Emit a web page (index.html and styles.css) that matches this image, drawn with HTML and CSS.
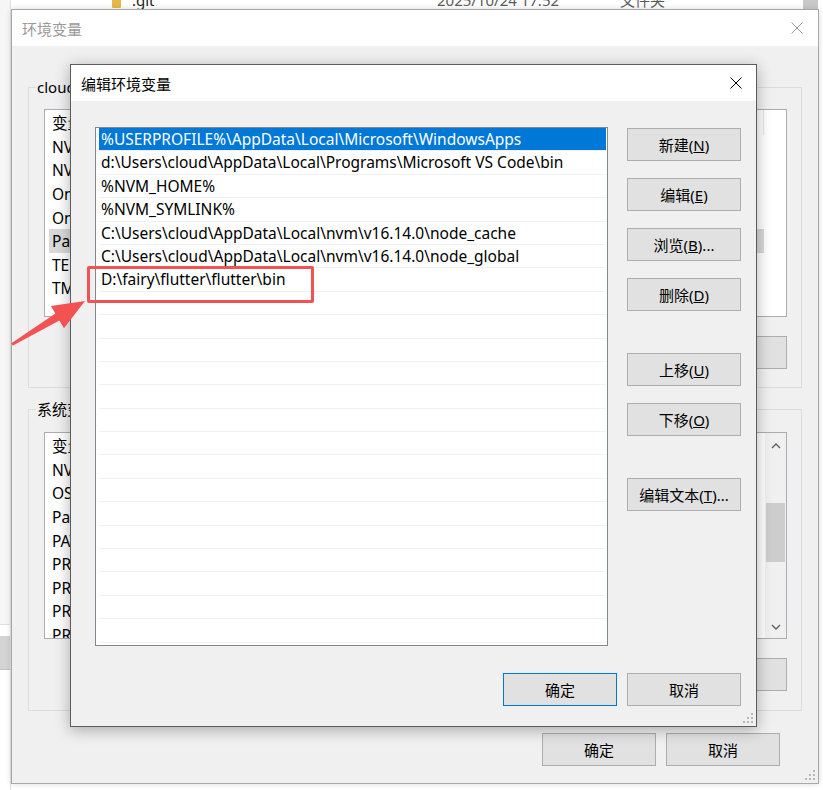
FILE: index.html
```html
<!DOCTYPE html>
<html lang="zh-CN">
<head>
<meta charset="utf-8">
<title>编辑环境变量</title>
<link rel="stylesheet" href="styles.css">
</head>
<body>
<div class="desktop">
  <div class="explorer">
    <div class="explorer-row">
      <span class="folder-icon"></span>
      <span class="ex-name">.git</span>
      <span class="ex-date">2025/10/24 17:52</span>
      <span class="ex-type">文件夹</span>
    </div>
    <div class="explorer-scroll"></div>
    <div class="explorer-left">
      <div class="ex-left-top"></div>
      <div class="ex-left-btn"></div>
    </div>
  </div>

  <div class="win win-env">
    <div class="titlebar inactive">
      <span class="title">环境变量</span>
      <svg class="close" width="12" height="12" viewBox="0 0 12 12"><path d="M0.5 0.5L11.5 11.5M11.5 0.5L0.5 11.5" stroke="#9a9a9a" stroke-width="1" fill="none"/></svg>
    </div>
    <div class="env-body">
      <div class="group group-user">
        <span class="group-label">cloud 的用户变量(<u>U</u>)</span>
        <div class="lv lv-user">
          <div class="lv-head"><span class="c1">变量</span><span class="c2">值</span></div>
          <div class="lv-row"><span class="c1">NVM_HOME</span><span class="c2">C:\Users\cloud\AppData\Local\nvm</span></div>
          <div class="lv-row"><span class="c1">NVM_SYMLINK</span><span class="c2">C:\Program Files\nodejs</span></div>
          <div class="lv-row"><span class="c1">OneDrive</span><span class="c2">C:\Users\cloud\OneDrive</span></div>
          <div class="lv-row"><span class="c1">OneDriveConsumer</span><span class="c2">C:\Users\cloud\OneDrive</span></div>
          <div class="lv-row sel"><span class="c1">Path</span><span class="c2">%USERPROFILE%\AppData\Local\Microsoft</span></div>
          <div class="lv-row"><span class="c1">TEMP</span><span class="c2">%USERPROFILE%\AppData\Local\Temp</span></div>
          <div class="lv-row"><span class="c1">TMP</span><span class="c2">%USERPROFILE%\AppData\Local\Temp</span></div>
        </div>
        <div class="group-buttons">
          <button class="btn">新建(<u>N</u>)...</button>
          <button class="btn">编辑(<u>E</u>)...</button>
          <button class="btn">删除(<u>D</u>)</button>
        </div>
      </div>
      <div class="group group-sys">
        <span class="group-label">系统变量(<u>S</u>)</span>
        <div class="lv lv-sys">
          <div class="lv-content">
            <div class="lv-head"><span class="c1">变量</span><span class="c2">值</span></div>
            <div class="lv-row"><span class="c1">NVM_HOME</span><span class="c2">C:\Users\cloud\AppData\Local\nvm</span></div>
            <div class="lv-row"><span class="c1">OS</span><span class="c2">Windows_NT</span></div>
            <div class="lv-row"><span class="c1">Path</span><span class="c2">C:\Windows\system32;C:\Windows</span></div>
            <div class="lv-row"><span class="c1">PATHEXT</span><span class="c2">.COM;.EXE;.BAT;.CMD;.VBS</span></div>
            <div class="lv-row"><span class="c1">PROCESSOR_ARCHITECTURE</span><span class="c2">AMD64</span></div>
            <div class="lv-row"><span class="c1">PROCESSOR_IDENTIFIER</span><span class="c2">Intel64 Family 6</span></div>
            <div class="lv-row"><span class="c1">PROCESSOR_LEVEL</span><span class="c2">6</span></div>
            <div class="lv-row"><span class="c1">PROCESSOR_REVISION</span><span class="c2">9a03</span></div>
          </div>
          <div class="scrollbar">
            <svg class="chev" width="10" height="6" viewBox="0 0 10 6"><path d="M1 5L5 1L9 5" stroke="#606060" stroke-width="1.4" fill="none"/></svg>
            <div class="track"><div class="thumb"></div></div>
            <svg class="chev" width="10" height="6" viewBox="0 0 10 6"><path d="M1 1L5 5L9 1" stroke="#606060" stroke-width="1.4" fill="none"/></svg>
          </div>
        </div>
        <div class="group-buttons">
          <button class="btn">新建(<u>W</u>)...</button>
          <button class="btn">编辑(<u>I</u>)...</button>
          <button class="btn">删除(<u>L</u>)</button>
        </div>
      </div>
      <div class="footer env-footer">
        <button class="btn">确定</button>
        <button class="btn">取消</button>
      </div>
    </div>
    <svg class="grip" width="10" height="10" viewBox="0 0 10 10"><g fill="#b8b8b8"><rect x="8" y="0" width="2" height="2"/><rect x="4" y="4" width="2" height="2"/><rect x="8" y="4" width="2" height="2"/><rect x="0" y="8" width="2" height="2"/><rect x="4" y="8" width="2" height="2"/><rect x="8" y="8" width="2" height="2"/></g></svg>
  </div>

  <div class="win win-edit">
    <div class="titlebar">
      <span class="title">编辑环境变量</span>
      <svg class="close" width="12" height="12" viewBox="0 0 12 12"><path d="M0.5 0.5L11.5 11.5M11.5 0.5L0.5 11.5" stroke="#000" stroke-width="1" fill="none"/></svg>
    </div>
    <div class="edit-body">
      <div class="edit-main">
        <div class="path-list">
          <div class="p-row sel">%USERPROFILE%\AppData\Local\Microsoft\WindowsApps</div>
          <div class="p-row">d:\Users\cloud\AppData\Local\Programs\Microsoft VS Code\bin</div>
          <div class="p-row">%NVM_HOME%</div>
          <div class="p-row">%NVM_SYMLINK%</div>
          <div class="p-row">C:\Users\cloud\AppData\Local\nvm\v16.14.0\node_cache</div>
          <div class="p-row">C:\Users\cloud\AppData\Local\nvm\v16.14.0\node_global</div>
          <div class="p-row">D:\fairy\flutter\flutter\bin</div>
          <div class="p-row"></div><div class="p-row"></div><div class="p-row"></div>
          <div class="p-row"></div><div class="p-row"></div><div class="p-row"></div>
          <div class="p-row"></div><div class="p-row"></div><div class="p-row"></div>
          <div class="p-row"></div><div class="p-row"></div><div class="p-row"></div>
          <div class="p-row"></div><div class="p-row"></div><div class="p-row"></div>
        </div>
        <div class="side-buttons">
          <button class="btn">新建(<u>N</u>)</button>
          <button class="btn">编辑(<u>E</u>)</button>
          <button class="btn">浏览(<u>B</u>)...</button>
          <button class="btn">删除(<u>D</u>)</button>
          <button class="btn spaced">上移(<u>U</u>)</button>
          <button class="btn">下移(<u>O</u>)</button>
          <button class="btn spaced">编辑文本(<u>T</u>)...</button>
        </div>
      </div>
      <div class="footer edit-footer">
        <button class="btn default">确定</button>
        <button class="btn">取消</button>
      </div>
    </div>
    <svg class="grip" width="10" height="10" viewBox="0 0 10 10"><g fill="#b8b8b8"><rect x="8" y="0" width="2" height="2"/><rect x="4" y="4" width="2" height="2"/><rect x="8" y="4" width="2" height="2"/><rect x="0" y="8" width="2" height="2"/><rect x="4" y="8" width="2" height="2"/><rect x="8" y="8" width="2" height="2"/></g></svg>
  </div>

  <div class="highlight"></div>
  <svg class="arrow" width="100" height="90" viewBox="0 0 100 90">
    <polygon points="11,73.5 55.4,43.6 50.9,35.9 85,31 63.95,58.3 59.4,50.6 13,75.5" fill="#f25252"/>
  </svg>
</div>
</body>
</html>
```

FILE: styles.css
```css
* { box-sizing: border-box; }

html, body {
  margin: 0;
  padding: 0;
  background: #ffffff;
}

.desktop {
  position: relative;
  width: 823px;
  height: 790px;
  overflow: hidden;
  background: #ffffff;
  font-family: "Noto Sans", "Noto Sans CJK SC", sans-serif;
  font-size: 15px;
  color: #000;
}

/* explorer window behind */
.explorer-row {
  position: absolute;
  left: 0;
  top: -10px;
  width: 823px;
  height: 20px;
  line-height: 20px;
  color: #5a5a5a;
  font-size: 15px;
}
.folder-icon {
  position: absolute;
  left: 112px;
  top: 8px;
  width: 9px;
  height: 10px;
  background: #e8b84a;
  border-radius: 1px;
}
.ex-name { position: absolute; left: 132px; top: 0; color: #222; }
.ex-date { position: absolute; left: 437px; top: 0; }
.ex-type { position: absolute; left: 620px; top: 0; }
.explorer-scroll {
  position: absolute;
  left: 803px;
  top: 0;
  width: 15px;
  height: 10px;
  background: #c9c9c9;
}
.explorer-left {
  position: absolute;
  left: 0;
  top: 0;
  width: 11px;
  height: 790px;
  display: flex;
  flex-direction: column;
  border-right: 1px solid #e2e2e2;
}
.ex-left-top {
  height: 625px;
  background: #f6f6f6;
  border-bottom: 1px solid #e0e0e0;
}
.ex-left-btn {
  margin-top: 11px;
  height: 34px;
  background: #d4d4d4;
  border-bottom: 1px solid #c4c4c4;
}

/* windows */
.win {
  position: absolute;
  display: flex;
  flex-direction: column;
  background: #f0f0f0;
}
.titlebar {
  height: 36px;
  flex: none;
  background: #ffffff;
  display: flex;
  align-items: center;
  justify-content: space-between;
  padding-left: 10px;
}
.titlebar .title { font-size: 15px; color: #000; }
.titlebar.inactive .title { color: #9a9a9a; }

.win-env {
  left: 11px;
  top: 9px;
  width: 808px;
  height: 775px;
  border: 1px solid #a8a8a8;
  box-shadow: 0 0 6px rgba(0,0,0,0.15);
}
.win-env .close { margin-right: 15px; }

.env-body {
  flex: 1;
  padding: 41px 16px 0 16px;
  display: flex;
  flex-direction: column;
}

.group {
  position: relative;
  border: 1px solid #dcdcdc;
  padding: 21px 14px 0 15px;
  display: flex;
  flex-direction: column;
}
.group-user { height: 301px; }
.group-sys { height: 302px; margin-top: 21px; padding-top: 22px; }
.group-label {
  position: absolute;
  left: 7px;
  top: -11px;
  padding: 0 1px;
  background: #f0f0f0;
  line-height: 20px;
  white-space: nowrap;
}

.lv {
  background: #ffffff;
  border: 1px solid #abadb3;
  overflow: hidden;
  position: relative;
  font-size: 15.5px;
}
.lv-user { height: 208px; }
.lv-sys { height: 207px; display: flex; }
.lv-content { flex: 1; overflow: hidden; }
.lv-head, .lv-row {
  display: flex;
  white-space: nowrap;
  align-items: center;
}
.lv-head { height: 25px; padding-left: 7px; }
.lv-row { height: 23.6px; padding-left: 7px; margin-right: 22px; }
.lv-head .c1, .lv-row .c1 { width: 200px; overflow: hidden; }
.lv-head .c2 { border-left: 1px solid #e5e5e5; height: 25px; line-height: 25px; padding-left: 6px; flex: 1; border-right: 1px solid #e5e5e5; margin-right: 22px; }
.lv-row .c2 { padding-left: 6px; }
.lv-row.sel { background: #d9d9d9; margin-left: 4px; padding-left: 3px; }

.scrollbar {
  width: 21px;
  flex: none;
  background: #f0f0f0;
  display: flex;
  flex-direction: column;
  align-items: center;
  padding: 10px 0 8px;
}
.scrollbar .track {
  flex: 1;
  width: 100%;
  padding: 54px 1px 0;
}
.scrollbar .thumb {
  height: 59px;
  background: #cdcdcd;
}

.group-buttons {
  display: flex;
  justify-content: flex-end;
  gap: 10px;
  margin-top: 19px;
}

.btn {
  width: 114px;
  height: 33px;
  padding: 0;
  margin: 0;
  background: #e1e1e1;
  border: 1px solid #adadad;
  font-family: "Noto Sans", "Noto Sans CJK SC", sans-serif;
  font-size: 15px;
  color: #000;
  display: flex;
  align-items: center;
  justify-content: center;
  white-space: nowrap;
}
.btn.default { border-color: #0078d7; }

.footer {
  display: flex;
  justify-content: flex-end;
  gap: 10px;
}
.env-footer { margin-top: 22px; margin-right: 22px; }

.grip {
  position: absolute;
  right: 3px;
  bottom: 3px;
}

/* edit dialog */
.win-edit {
  left: 70px;
  top: 64px;
  width: 687px;
  height: 663px;
  border: 1px solid #5c5c5c;
  box-shadow: 0 3px 14px rgba(0,0,0,0.3);
}
.win-edit .close { margin-right: 14px; }

.edit-body {
  flex: 1;
  padding: 26px 15px 0 24px;
  display: flex;
  flex-direction: column;
}
.edit-main {
  display: flex;
  gap: 19px;
}
.path-list {
  width: 513px;
  height: 519px;
  background: #ffffff;
  border: 1px solid #828790;
  padding: 0 1px 0 3px;
  overflow: hidden;
  font-size: 15.5px;
}
.p-row {
  height: 23.4px;
  line-height: 23px;
  padding-left: 2px;
  border-bottom: 1px solid #f0f0f0;
  white-space: nowrap;
}
.p-row.sel {
  background: #0078d7;
  color: #ffffff;
}
.side-buttons {
  display: flex;
  flex-direction: column;
  gap: 17px;
  padding-top: 1px;
}
.side-buttons .spaced { margin-top: 25px; }

.edit-footer { margin-top: 27px; }

/* annotations */
.highlight {
  position: absolute;
  left: 87px;
  top: 266px;
  width: 227px;
  height: 37px;
  border: 3px solid #f25252;
  border-radius: 2px;
}
.arrow {
  position: absolute;
  left: 0;
  top: 270px;
}
```
